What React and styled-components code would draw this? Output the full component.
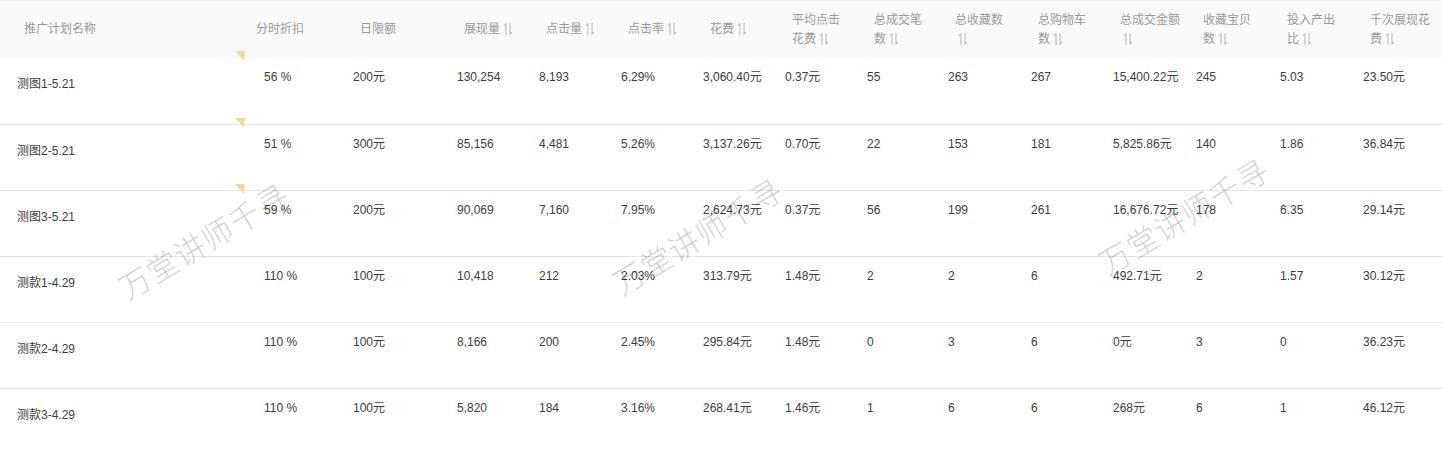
import styled, { createGlobalStyle } from 'styled-components';

const GlobalStyle = createGlobalStyle`
  html, body {
    margin: 0;
    padding: 0;
    background: #fff;
  }
  body {
    font-family: 'Liberation Sans', 'Noto Sans CJK SC', sans-serif;
    font-size: 12px;
  }
`;

const COLUMNS = '242px 104px 104px 82px 82px 82px 82px 82px 81px 83px 82px 83px 84px 83px 1fr';

const headers = [
  { lines: ['推广计划名称'], pad: 24 },
  { lines: ['分时折扣'] },
  { lines: ['日限额'] },
  { lines: ['展现量'], sort: true },
  { lines: ['点击量'], sort: true },
  { lines: ['点击率'], sort: true },
  { lines: ['花费'], sort: true },
  { lines: ['平均点击', '花费'], sort: true },
  { lines: ['总成交笔', '数'], sort: true },
  { lines: ['总收藏数', ''], sort: true },
  { lines: ['总购物车', '数'], sort: true },
  { lines: ['总成交金额', ''], sort: true },
  { lines: ['收藏宝贝', '数'], sort: true },
  { lines: ['投入产出', '比'], sort: true },
  { lines: ['千次展现花', '费'], sort: true }
];

const rows = [
  { flag: true, cells: ['测图1-5.21', '56 %', '200元', '130,254', '8,193', '6.29%', '3,060.40元', '0.37元', '55', '263', '267', '15,400.22元', '245', '5.03', '23.50元'] },
  { flag: true, cells: ['测图2-5.21', '51 %', '300元', '85,156', '4,481', '5.26%', '3,137.26元', '0.70元', '22', '153', '181', '5,825.86元', '140', '1.86', '36.84元'] },
  { flag: true, cells: ['测图3-5.21', '59 %', '200元', '90,069', '7,160', '7.95%', '2,624.73元', '0.37元', '56', '199', '261', '16,676.72元', '178', '6.35', '29.14元'] },
  { cells: ['测款1-4.29', '110 %', '100元', '10,418', '212', '2.03%', '313.79元', '1.48元', '2', '2', '6', '492.71元', '2', '1.57', '30.12元'] },
  { cells: ['测款2-4.29', '110 %', '100元', '8,166', '200', '2.45%', '295.84元', '1.48元', '0', '3', '6', '0元', '3', '0', '36.23元'] },
  { cells: ['测款3-4.29', '110 %', '100元', '5,820', '184', '3.16%', '268.41元', '1.46元', '1', '6', '6', '268元', '6', '1', '46.12元'] }
];

const watermarks = [
  { left: 203, top: 240 },
  { left: 697, top: 235 },
  { left: 1183, top: 215 }
];

function SortIcon() {
  return (
    <SortSvg width='10' height='14' viewBox='0 0 10 14'>
      <path d='M3 1.5 V13 M3 1.5 L1 4' />
      <path d='M7 1 V12.5 M7 12.5 L9 10' />
    </SortSvg>
  );
}

export default function App() {
  return (
    <>
      <GlobalStyle />
      <Table>
        <HeadRow>
          {headers.map((h, i) => (
            <HeadCell key={i} pad={h.pad}>
              <HeadLabel>
                {h.lines.map((line, j) => (
                  <span key={j}>
                    {line}
                    {h.sort && j === h.lines.length - 1 && <SortIcon />}
                    {j < h.lines.length - 1 && <br />}
                  </span>
                ))}
              </HeadLabel>
            </HeadCell>
          ))}
        </HeadRow>
        {rows.map((r, i) => (
          <BodyRow key={i}>
            {r.cells.map((c, j) =>
              j === 0 ? (
                <NameCell key={j}>{c}</NameCell>
              ) : j === 1 ? (
                <DiscountCell key={j}>
                  {r.flag && <Flag />}
                  {c}
                </DiscountCell>
              ) : (
                <Cell key={j}>{c}</Cell>
              )
            )}
          </BodyRow>
        ))}
        {watermarks.map((w, i) => (
          <Watermark key={i} style={{ left: w.left, top: w.top }}>
            万堂讲师千寻
          </Watermark>
        ))}
      </Table>
    </>
  );
}

const Table = styled.div`
  position: relative;
  width: 1443px;
  overflow: hidden;
`;

const HeadRow = styled.div`
  display: grid;
  grid-template-columns: ${COLUMNS};
  height: 58px;
  background: #fafafa;
  border-top: 1px solid #f2f2f2;
  box-sizing: border-box;
`;

const HeadCell = styled.div`
  display: flex;
  align-items: center;
  padding-left: ${p => p.pad ?? 14}px;
  color: #9a9a9a;
  font-size: 12px;
  line-height: 19px;
`;

const HeadLabel = styled.div`
  white-space: nowrap;
`;

const SortSvg = styled.svg`
  margin-left: 3px;
  vertical-align: -3px;
  fill: none;
  stroke: #b4b4b4;
  stroke-width: 1;
`;

const BodyRow = styled.div`
  display: grid;
  grid-template-columns: ${COLUMNS};
  height: 66px;
  box-sizing: border-box;

  & + & {
    border-top: 1px solid #e6e6e6;
  }
`;

const Cell = styled.div`
  position: relative;
  padding: 10px 0 0 7px;
  color: #3c3c3c;
  font-size: 12px;
  line-height: 18px;
  white-space: nowrap;
`;

const NameCell = styled(Cell)`
  padding: 17px 0 0 17px;
`;

const DiscountCell = styled(Cell)`
  padding-left: 22px;
`;

const Flag = styled.span`
  position: absolute;
  left: -7px;
  top: -7px;
  width: 10px;
  height: 10px;
  background: #f6d6a4;
  clip-path: polygon(0 0, 100% 0, 90% 100%);
  z-index: 1;
`;

const Watermark = styled.div`
  position: absolute;
  transform: translate(-50%, -50%) rotate(-31deg);
  font-family: 'Noto Sans CJK SC', sans-serif;
  font-size: 31px;
  font-weight: 300;
  letter-spacing: 1px;
  color: rgba(0, 0, 0, 0.19);
  white-space: nowrap;
  pointer-events: none;
`;
